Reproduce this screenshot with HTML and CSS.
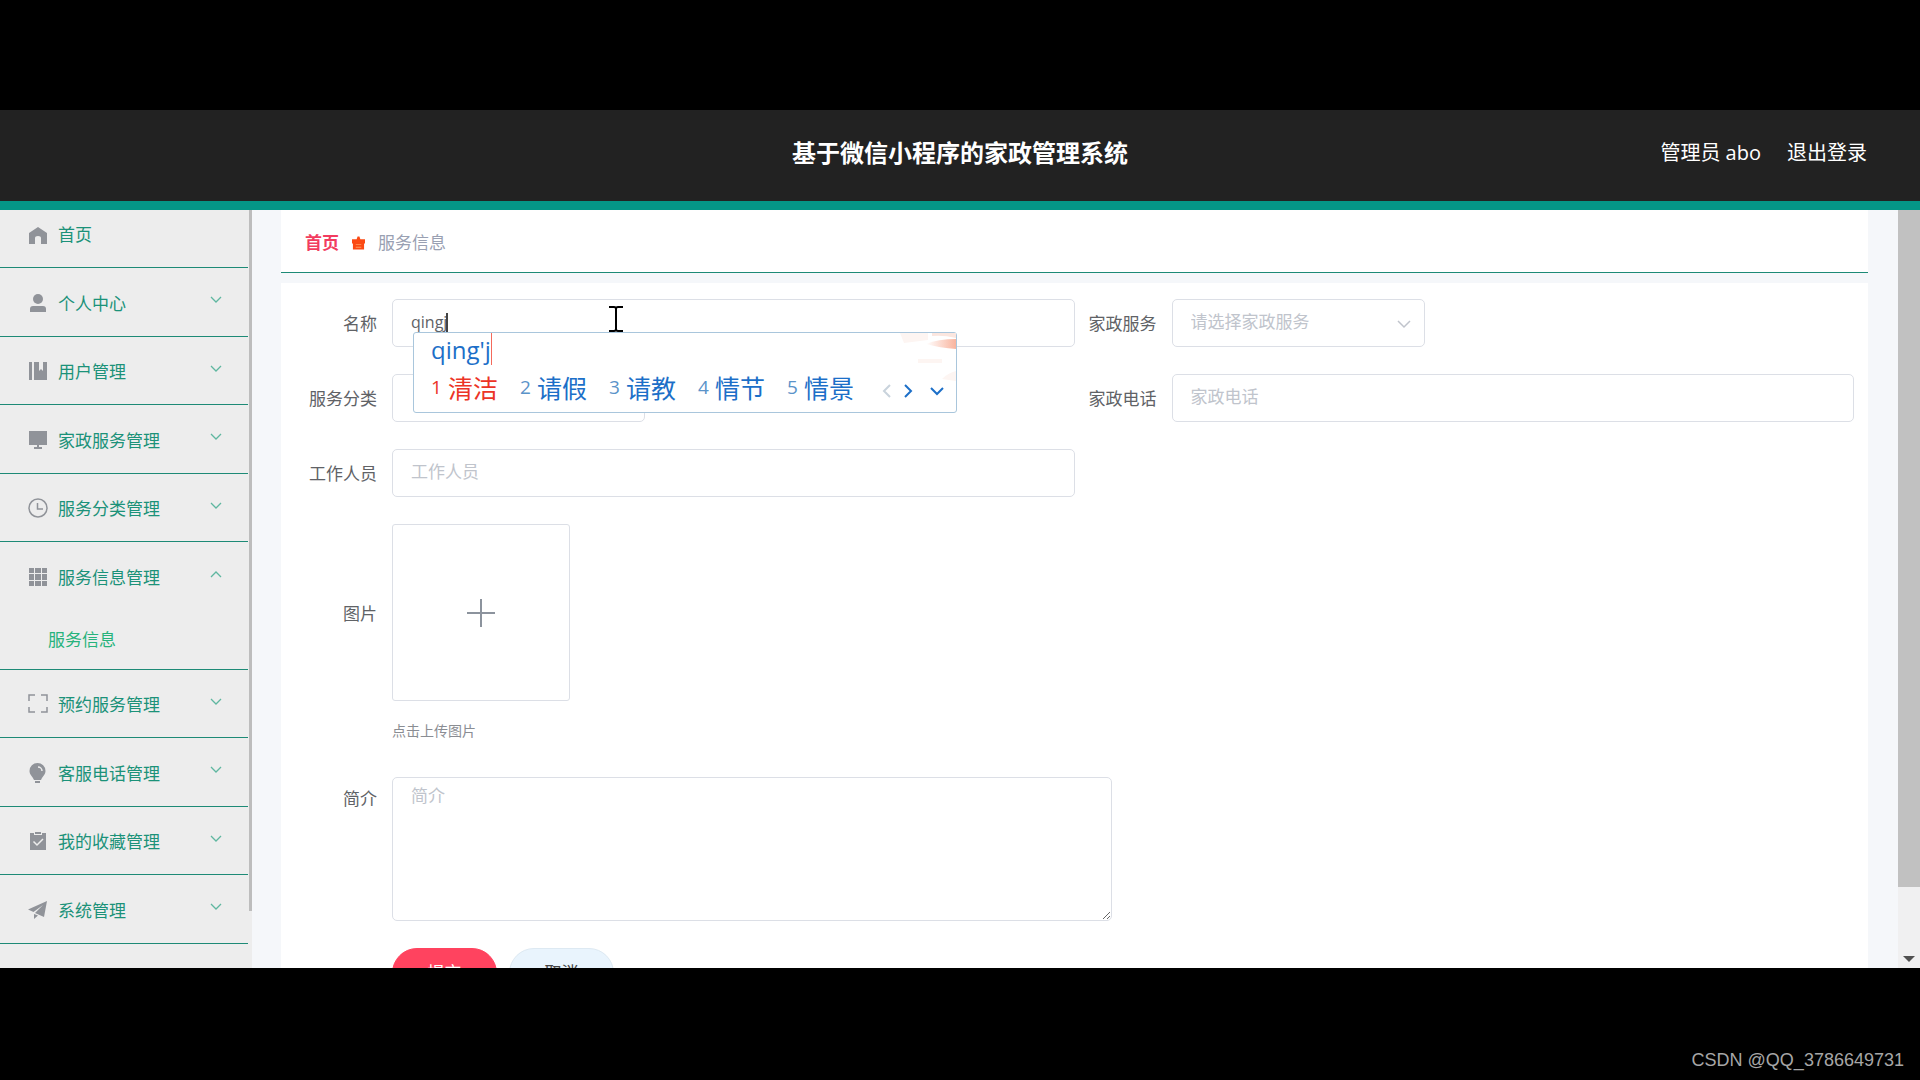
FILE: index.html
```html
<!DOCTYPE html>
<html lang="zh-CN">
<head>
<meta charset="utf-8">
<title>基于微信小程序的家政管理系统</title>
<link rel="stylesheet" href="styles.css">
</head>
<body>
<div class="app">
  <header class="header">
    <h1 class="header-title">基于微信小程序的家政管理系统</h1>
    <div class="header-user"><span>管理员 abo</span><a href="#">退出登录</a></div>
  </header>
  <div class="body">
    <nav class="sidebar">
      <ul class="menu">
        <li class="menu-item menu-home"><a class="menu-link" href="#"><svg class="icon" viewBox="0 0 18 18"><path d="M9 1 0 7v11h6v-6q0-2 3-2t3 2v6h6V7z"/></svg><span>首页</span></a></li>
        <li class="menu-item"><a class="menu-link" href="#"><svg class="icon" viewBox="0 0 18 18"><circle cx="9" cy="5" r="5"/><path d="M1 18v-3q0-3 3-3h10q3 0 3 3v3z"/></svg><span>个人中心</span><svg class="arrow" viewBox="0 0 12 8"><path d="m1 1 5 5 5-5"/></svg></a></li>
        <li class="menu-item"><a class="menu-link" href="#"><svg class="icon" viewBox="0 0 18 18"><path d="M0 0h3v18H0zM5 0h5v9l2-2 2 2V0h4v18H5z"/></svg><span>用户管理</span><svg class="arrow" viewBox="0 0 12 8"><path d="m1 1 5 5 5-5"/></svg></a></li>
        <li class="menu-item"><a class="menu-link" href="#"><svg class="icon" viewBox="0 0 18 18"><path d="M0 0h18v14H0zM8 14h2v2h3v2H5v-2h3z"/></svg><span>家政服务管理</span><svg class="arrow" viewBox="0 0 12 8"><path d="m1 1 5 5 5-5"/></svg></a></li>
        <li class="menu-item"><a class="menu-link" href="#"><svg class="icon line" viewBox="0 0 18 18"><circle cx="9" cy="9" r="9"/><path d="M8.500 4v6H14"/></svg><span>服务分类管理</span><svg class="arrow" viewBox="0 0 12 8"><path d="m1 1 5 5 5-5"/></svg></a></li>
        <li class="menu-item menu-open"><a class="menu-link" href="#"><svg class="icon" viewBox="0 0 18 18"><path d="M0 0h5v5H0zM6 0h6v5H6zM13 0h5v5h-5zM0 6h5v6H0zM6 6h6v6H6zM13 6h5v6h-5zM0 13h5v5H0zM6 13h6v5H6zM13 13h5v5h-5z"/></svg><span>服务信息管理</span><svg class="arrow" viewBox="0 0 12 8"><path d="m1 7 5-5 5 5"/></svg></a><a class="submenu-link" href="#">服务信息</a></li>
        <li class="menu-item"><a class="menu-link" href="#"><svg class="icon line" viewBox="0 0 18 18"><path d="M0 6V0h6M12 0h6v6M18 12v5h-6M6 17H0v-5"/></svg><span>预约服务管理</span><svg class="arrow" viewBox="0 0 12 8"><path d="m1 1 5 5 5-5"/></svg></a></li>
        <li class="menu-item"><a class="menu-link" href="#"><svg class="icon" viewBox="0 0 18 18"><path d="M8.500-1a8 8 0 0 1 8 8c0 4-3 5-4.500 9H5c-1.500-4-4.500-5-4.500-9a8 8 0 0 1 8-8zM6 17h5v2H6z"/><path class="shine" d="M9 3a4 4 0 0 1 4 4"/></svg><span>客服电话管理</span><svg class="arrow" viewBox="0 0 12 8"><path d="m1 1 5 5 5-5"/></svg></a></li>
        <li class="menu-item"><a class="menu-link" href="#"><svg class="icon" viewBox="0 0 18 18"><path d="M1 1h4v2h8V1h4v17H1zM6 0h6v2H6z"/><path class="tick" d="m4.500 9.500 3.500 3.500 6-6"/></svg><span>我的收藏管理</span><svg class="arrow" viewBox="0 0 12 8"><path d="m1 1 5 5 5-5"/></svg></a></li>
        <li class="menu-item"><a class="menu-link" href="#"><svg class="icon" viewBox="0 0 18 18"><path d="M18 0-1 8.500 4.500 11 14 4l-8 8 9 4zM5 13v5l4-3.500z"/></svg><span>系统管理</span><svg class="arrow" viewBox="0 0 12 8"><path d="m1 1 5 5 5-5"/></svg></a></li>
      </ul>
      <div class="sidebar-thumb"></div>
    </nav>
    <main class="main">
      <div class="breadcrumb">
        <a class="crumb-home" href="#">首页</a>
        <svg class="crumb-icon" viewBox="0 0 14 14"><path fill="#fb4a14" d="M6 0h2l1 3h5v4l-1 1v6H1V8L0 7V3h5z"/><path fill="#ff9a5c" d="M4 8h6v1H4zM4 11h6v1H4z"/></svg>
        <span>服务信息</span>
      </div>
      <form class="form">
        <div class="field"><label for="name">名称</label>
          <div class="name-wrap">
            <input class="input name-input" id="name" type="text" value="qingj">
            <i class="caret"></i>
            <svg class="ibeam" viewBox="0 0 14 26"><path d="M0 1h5q2 0 2 2 0-2 2-2h5M7 3v20M0 25h5q2 0 2-2 0 2 2 2h5"/></svg>
            <div class="ime">
              <svg class="ime-art" viewBox="0 0 60 56"><defs><linearGradient id="fade"><stop offset="0" stop-color="#fff"/><stop offset="1" stop-color="#f9b49e"/></linearGradient></defs><path fill="#fdf5f2" d="M4 0h28v7L8 10zM22 26h24v4H22zM46 46q6-6 14-8v10z"/><path fill="url(#fade)" d="M30 11Q42 6 60 6v10q-16-1-30-5z"/><path fill="#fbe6df" d="M36 0h24v5q-12-3-24-2z"/></svg>
              <div class="ime-typed">qing'j</div>
              <ol class="ime-list">
                <li class="first"><b>1</b>清洁</li><li><b>2</b>请假</li><li><b>3</b>请教</li><li><b>4</b>情节</li><li><b>5</b>情景</li>
              </ol>
              <svg class="ime-nav" viewBox="0 0 64 16"><path class="off" d="m9 2-6 6 6 6"/><path d="m24 2 6 6-6 6M50 5l6 6 6-6"/></svg>
            </div>
          </div>
        </div>
        <div class="field"><label for="service">家政服务</label>
          <div class="select-wrap"><select class="input" id="service"><option>请选择家政服务</option></select><svg class="select-arrow" viewBox="0 0 14 10"><path d="m1 2 6 6 6-6"/></svg></div>
        </div>
        <div class="field"><label for="category">服务分类</label>
          <div class="select-wrap"><select class="input" id="category"><option></option></select></div>
        </div>
        <div class="field"><label for="phone">家政电话</label><input class="input" id="phone" type="text" placeholder="家政电话"></div>
        <div class="field wide"><label for="staff">工作人员</label><input class="input half" id="staff" type="text" placeholder="工作人员"></div>
        <div class="field wide"><label for="upload">图片</label>
          <button class="upload" id="upload" type="button" aria-label="上传图片"><svg viewBox="0 0 28 28"><path d="M14 0v28M0 14h28"/></svg></button>
        </div>
        <p class="hint">点击上传图片</p>
        <div class="field wide top"><label for="intro">简介</label><textarea class="input area" id="intro" placeholder="简介"></textarea></div>
        <div class="actions"><button class="btn primary" type="button">提交</button><button class="btn" type="button">取消</button></div>
      </form>
    </main>
    <div class="scrollbar"><div class="scroll-thumb"></div><div class="scroll-down"></div></div>
  </div>
</div>
<footer class="watermark">CSDN @QQ_3786649731</footer>
</body>
</html>
```
FILE: styles.css
```css
* { box-sizing: border-box; }
body {
  margin: 0;
  height: 100vh;
  display: grid;
  grid-template-rows: minmax(0, 1fr) 112px;
  padding-top: 110px;
  background: #000;
  color: #606266;
  font: 17px/24px "Open Sans", "Noto Sans CJK SC", sans-serif;
  overflow: hidden;
}
a { color: inherit; text-decoration: none; }
button, input, select, textarea { font: inherit; }
svg { flex: none; }

.app { display: flex; flex-direction: column; min-height: 0; overflow: hidden; background: #f5f7fa; }
.header {
  flex: none;
  height: 100px;
  display: grid;
  grid-template-columns: 1fr auto 1fr;
  align-items: center;
  padding: 0 53px 5px;
  background: #222;
  border-bottom: 9px solid #049687;
  color: #fff;
}
.header-title { grid-column: 2; margin: 0; font-size: 24px; line-height: 32px; }
.header-user { display: flex; justify-content: flex-end; gap: 26px; font-size: 20px; }

.body { flex: 1; min-height: 0; display: flex; }
.sidebar { flex: none; width: 252px; display: flex; gap: 1px; background: #ededed; overflow: hidden; }
.menu { width: 248px; margin: 0; padding: 0; list-style: none; color: #1b9279; }
.menu-item { height: 68px; border-bottom: 1px solid #1d8a76; }
.menu-item:nth-child(even) { height: 69px; }
.menu-item.menu-home { height: 58px; }
.menu-item.menu-open { height: 128px; }
.menu-link { display: flex; align-items: center; gap: 11px; height: 100%; padding: 3px 26px 0 29px; }
.menu-home .menu-link { padding-top: 0; padding-bottom: 8px; }
.menu-open .menu-link { height: 68px; }
.icon { width: 18px; height: 18px; margin-bottom: 2px; fill: #909399; overflow: visible; }
.menu-home .icon { margin-bottom: 0; }
.icon.line { fill: none; stroke: #909399; stroke-width: 1.500; }
.icon .shine, .icon .tick { fill: none; stroke: #ededed; stroke-width: 1.500; }
.arrow { width: 12px; height: 8px; margin: 0 0 7px auto; fill: none; stroke: #5fb7a0; stroke-width: 1.300; }
.submenu-link { display: block; padding: 18px 0 0 48px; height: 59px; color: #27b37c; }
.sidebar-thumb { width: 3px; margin-bottom: 57px; background: #bdbdbd; }

.main { flex: 1; min-width: 0; padding: 0 30px 0 29px; overflow: hidden; }
.breadcrumb {
  height: 63px;
  display: flex;
  align-items: center;
  gap: 13px;
  padding: 4px 24px 0;
  background: #fff;
  border-bottom: 1px solid #1d8a76;
  color: #99a0b2;
}
.crumb-home { font-weight: 700; color: #f23c5f; }
.crumb-icon { width: 13px; height: 14px; }
.form {
  margin-top: 10px;
  display: grid;
  grid-template-columns: 1fr 1fr;
  row-gap: 27px;
  padding: 16px 14px;
  background: #fff;
}
.field { display: grid; grid-template-columns: 82px minmax(0, 1fr); column-gap: 15px; align-items: center; }
.field > label { text-align: right; padding-top: 2px; white-space: nowrap; }
.wide { grid-column: 1 / -1; }
.field.top { align-items: start; }
.field.top > label { padding-top: 10px; }
.input {
  display: block;
  width: 100%;
  height: 48px;
  padding: 0 18px 3px;
  border: 1px solid #dcdfe6;
  border-radius: 5px;
  background: #fff;
  color: #606266;
  outline: none;
}
.input::placeholder { color: #c0c4cc; opacity: 1; }
.name-input { font-size: 16px; }
.half { width: calc(50% - 48px); }
.area { width: 720px; max-width: 100%; height: 144px; padding: 6px 18px; }
.select-wrap { position: relative; width: 253px; }
.select-wrap .input { appearance: none; color: #c0c4cc; }
.select-arrow { position: absolute; right: 14px; top: 20px; width: 14px; height: 10px; fill: none; stroke: #c0c4cc; stroke-width: 1.500; }
.name-wrap { position: relative; }
.caret { position: absolute; left: 54px; top: 14px; width: 2px; height: 19px; background: #444; }
.ibeam { position: absolute; left: 217px; top: 7px; width: 14px; height: 26px; fill: none; stroke: #000; stroke-width: 2; }

.upload { width: 178px; height: 177px; display: grid; place-items: center; padding: 0; border: 1px solid #dcdfe6; border-radius: 3px; background: #fff; }
.upload svg { width: 28px; height: 28px; stroke: #8c939d; stroke-width: 2; }
.hint { grid-column: 1 / -1; margin: -9px 0 7px 97px; font-size: 14px; line-height: 24px; color: #8a8d93; }
.actions { grid-column: 1 / -1; display: flex; gap: 12px; padding-left: 97px; }
.btn { width: 105px; height: 50px; padding: 0; border: 1px solid #dde9f2; border-radius: 25px; background: #e9f4fd; color: #444; }
.btn.primary { border-color: #ff435f; background: #ff435f; color: #fff; }

.ime {
  position: absolute;
  z-index: 2;
  left: 21px;
  top: 33px;
  width: 544px;
  height: 81px;
  padding: 0 17px;
  border: 1px solid #a9c6dc;
  border-radius: 3px;
  background: #fff;
  color: #1c6fc8;
  font-size: 25px;
  line-height: 36px;
}
.ime-art { position: absolute; right: 0; top: 0; width: 60px; height: 56px; }
.ime-typed { width: max-content; height: 32px; border-right: 1px solid #f46a5c; font-size: 24px; line-height: 34px; }
.ime-list { display: flex; margin: 5px 0 0; padding: 0; list-style: none; }
.ime-list li { display: flex; width: 89px; gap: 6px; }
.ime-list b { width: 11px; font-size: 19px; line-height: 34px; font-weight: 400; color: #5b93c9; }
.ime-list .first, .ime-list .first b { color: #ec3426; }
.ime-nav { position: absolute; right: 11px; bottom: 13px; width: 64px; height: 16px; fill: none; stroke: #1c6fc8; stroke-width: 2; }
.ime-nav .off { stroke: #c9d3dc; }

.scrollbar { flex: none; width: 22px; display: flex; flex-direction: column; align-items: center; justify-content: space-between; padding-bottom: 6px; background: #f0f0f1; }
.scroll-thumb { width: 100%; height: 90%; background: #c1c1c1; }
.scroll-down { border: 6px solid transparent; border-top-color: #505050; border-bottom: 0; }
.watermark { display: flex; align-items: flex-end; justify-content: flex-end; padding: 0 16px 8px; font: 18px/24px "Liberation Sans", sans-serif; color: #a6a6a6; }
```
